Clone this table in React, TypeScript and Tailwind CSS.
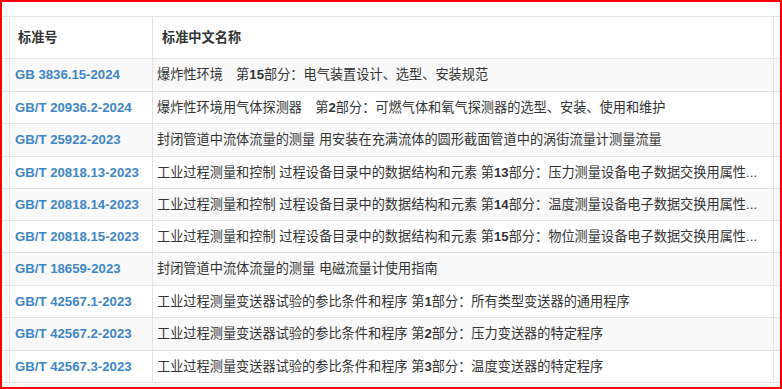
const rows: { code: string; name: string }[] = [
  { code: "GB 3836.15-2024", name: "爆炸性环境　第15部分：电气装置设计、选型、安装规范" },
  { code: "GB/T 20936.2-2024", name: "爆炸性环境用气体探测器　第2部分：可燃气体和氧气探测器的选型、安装、使用和维护" },
  { code: "GB/T 25922-2023", name: "封闭管道中流体流量的测量 用安装在充满流体的圆形截面管道中的涡街流量计测量流量" },
  { code: "GB/T 20818.13-2023", name: "工业过程测量和控制 过程设备目录中的数据结构和元素 第13部分：压力测量设备电子数据交换用属性..." },
  { code: "GB/T 20818.14-2023", name: "工业过程测量和控制 过程设备目录中的数据结构和元素 第14部分：温度测量设备电子数据交换用属性..." },
  { code: "GB/T 20818.15-2023", name: "工业过程测量和控制 过程设备目录中的数据结构和元素 第15部分：物位测量设备电子数据交换用属性..." },
  { code: "GB/T 18659-2023", name: "封闭管道中流体流量的测量 电磁流量计使用指南" },
  { code: "GB/T 42567.1-2023", name: "工业过程测量变送器试验的参比条件和程序 第1部分：所有类型变送器的通用程序" },
  { code: "GB/T 42567.2-2023", name: "工业过程测量变送器试验的参比条件和程序 第2部分：压力变送器的特定程序" },
  { code: "GB/T 42567.3-2023", name: "工业过程测量变送器试验的参比条件和程序 第3部分：温度变送器的特定程序" },
];

// 행 높이: 스크린샷이 살짝 축소돼 있어서 32/33 을 섞어 씀
const heights = [
  "h-[33px]", "h-[32px]", "h-[33px]", "h-[32px]", "h-[32px]",
  "h-[32px]", "h-[33px]", "h-[32px]", "h-[33px]", "h-[32px]",
];

function Name({ text }: { text: string }) {
  const parts = text.split(/(\d+)/);
  return (
    <>
      {parts.map((p, i) =>
        /^\d+$/.test(p) ? (
          <span key={i} className="font-bold">
            {p}
          </span>
        ) : (
          <span key={i}>{p}</span>
        )
      )}
    </>
  );
}

export default function App() {
  return (
    <div
      className="box-border h-[389px] w-[782px] border-2 border-[#ff0000] bg-white pt-[14px] text-[13.2px] text-[#333]"
      style={{ fontFamily: '"Liberation Sans", "Noto Sans CJK SC", sans-serif' }}
    >
      <div className="border-b border-[#e3e3e3]">
        <div className="grid h-[42px] grid-cols-[7px_143px_621px_7px] border-t border-[#e3e3e3] font-bold text-[#333]">
          <div />
          <div className="flex items-center border-l border-[#e3e3e3] pl-[8px]">标准号</div>
          <div className="flex items-center border-l border-[#e3e3e3] pl-[9px]">标准中文名称</div>
          <div className="border-l border-[#e3e3e3]" />
        </div>
        {rows.map((r, i) => (
          <div
            key={r.code}
            className={`grid grid-cols-[7px_143px_621px_7px] border-t border-[#e3e3e3] ${heights[i]} ${
              i % 2 === 0 ? "bg-[#f9f9f9]" : "bg-white"
            }`}
          >
            <div />
            <div className="flex items-center border-l border-[#e3e3e3] pl-[5px]">
              <a href="#" className="font-bold whitespace-nowrap text-[#3d86c8]">
                {r.code}
              </a>
            </div>
            <div className="flex min-w-0 items-center border-l border-[#e3e3e3] pl-[4px]">
              <span className="whitespace-nowrap">
                <Name text={r.name} />
              </span>
            </div>
            <div className="border-l border-[#e3e3e3]" />
          </div>
        ))}
      </div>
    </div>
  );
}
